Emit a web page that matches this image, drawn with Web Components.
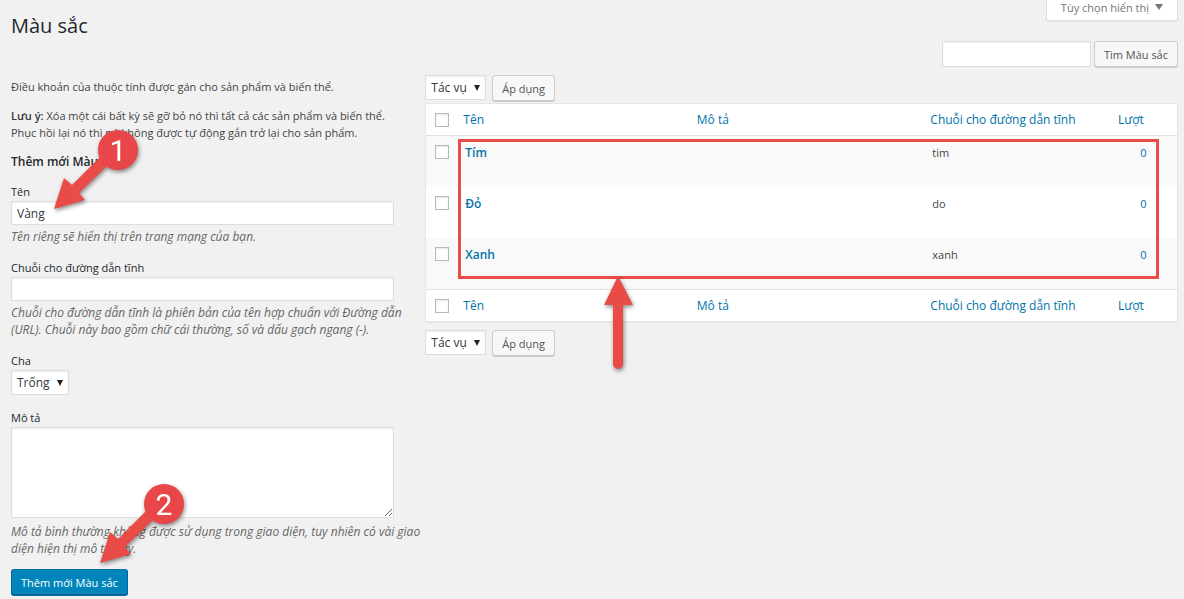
<!DOCTYPE html>
<html lang="vi">
<head>
<meta charset="utf-8">
<meta name="viewport" content="width=device-width, initial-scale=1">
<title>Màu sắc</title>
<style>
  body {
    margin: 0;
    background: #f1f1f1;
    color: #444;
    font: 11px/17px "Open Sans", "Noto Sans", sans-serif;
  }
</style>
</head>
<body>
<terms-page></terms-page>

<script>
/**
 * Creates a template element from markup.
 *
 * @param {string} markup - The styles and markup of a component.
 * @returns {HTMLTemplateElement} The template.
 */
const createTemplate = (markup) => {
  const template = document.createElement('template')
  template.innerHTML = markup
  return template
}

// Rules shared by the controls of several components.
const controlStyles = `
  input, textarea, select, button {
    box-sizing: border-box;
    margin: 0;
    color: #32373c;
    font-family: inherit;
    font-size: 11px;
    line-height: 17px;
  }
  input, textarea, select {
    border: 1px solid #ddd;
    border-radius: 0;
    background: #fff;
    box-shadow: inset 0 1px 2px rgba(0, 0, 0, 0.07);
  }
  .select {
    display: inline-grid;
    align-items: center;
    vertical-align: top;
  }
  .select select, .select svg {
    grid-area: 1 / 1;
  }
  select {
    appearance: none;
    height: 25px;
    padding: 0 18px 0 5px;
    font-size: 12px;
  }
  .select svg {
    justify-self: end;
    margin-right: 6px;
    pointer-events: none;
  }
`

const selectArrow = `
  <svg width="6" height="6" viewBox="0 0 6 6" aria-hidden="true">
    <path d="M0 0h6L3 6z" fill="#222"/>
  </svg>
`

/**
 * Base class that clones a template into an open shadow root.
 *
 * @augments HTMLElement
 */
class BaseElement extends HTMLElement {
  /**
   * Creates an instance of BaseElement.
   */
  constructor () {
    super()
    this.attachShadow({ mode: 'open' })
    this.shadowRoot.appendChild(this.constructor.template.content.cloneNode(true))
  }
}

/**
 * Push button, secondary by default and blue with the primary attribute.
 */
class ActionButton extends BaseElement {
  static template = createTemplate(`
    <style>
      ${controlStyles}
      :host {
        display: inline-block;
      }
      button {
        display: block;
        height: 26px;
        padding: 0 9px;
        border: 1px solid #ccc;
        border-radius: 3px;
        background: #f7f7f7;
        box-shadow: 0 1px 0 #ccc;
        color: #555;
        white-space: nowrap;
      }
      :host([primary]) button {
        border-color: #0073aa #006799 #006799;
        background: #0085ba;
        box-shadow: 0 1px 0 #006799;
        color: #fff;
      }
    </style>
    <button type="button"><slot></slot></button>
  `)
}
customElements.define('action-button', ActionButton)

/**
 * Labelled form field. The kind attribute is text, select or textarea,
 * the default slot takes the description below the control.
 */
class FormField extends BaseElement {
  static template = createTemplate(`
    <style>
      ${controlStyles}
      :host {
        display: block;
        position: relative;
      }
      label {
        display: block;
        margin-bottom: 1px;
        color: #23282d;
      }
      input, textarea {
        display: block;
        width: calc(100% - 31px);
        padding: 2px 5px;
      }
      input {
        height: 24px;
        font-size: 12px;
      }
      textarea {
        height: 91px;
        margin-bottom: 5px;
        resize: vertical;
      }
      p {
        margin: 3px 0 0;
        color: #666;
        font-size: 12px;
        font-style: italic;
      }
    </style>
    <label for="control"></label>
    <div class="control"></div>
    <p><slot></slot></p>
    <slot name="marker"></slot>
  `)

  /**
   * Builds the control that the kind attribute asks for.
   */
  connectedCallback () {
    const kind = this.getAttribute('kind')
    const value = this.getAttribute('value') || ''
    const holder = this.shadowRoot.querySelector('.control')
    this.shadowRoot.querySelector('label').textContent = this.getAttribute('label')

    if (kind === 'textarea') {
      holder.innerHTML = '<textarea id="control"></textarea>'
    } else if (kind === 'select') {
      holder.innerHTML = `
        <div class="select">
          <select id="control"><option>${value}</option></select>
          ${selectArrow}
        </div>`
      this.shadowRoot.querySelector('p').remove()
    } else {
      holder.innerHTML = `<input id="control" type="text" value="${value}">`
    }
  }
}
customElements.define('form-field', FormField)

/**
 * Numbered badge with an arrow that points down to the left.
 * The bottom left corner of the box is the tip of the arrow.
 */
class StepArrow extends BaseElement {
  static template = createTemplate(`
    <style>
      :host {
        position: absolute;
        z-index: 1;
        pointer-events: none;
      }
      svg {
        display: block;
        overflow: visible;
        filter: drop-shadow(1px 2px 2px rgba(0, 0, 0, 0.45));
      }
      text {
        font: 30px Roboto, sans-serif;
      }
    </style>
    <svg width="84" height="79" viewBox="0 0 84 79">
      <path d="M0 79L10 48l8 7 31-31 8 8-32 31 6 7z" fill="#e94b46"/>
      <circle cx="64" cy="20" r="20" fill="#e84648"/>
      <text x="64" y="31" text-anchor="middle" fill="#fff"></text>
    </svg>
  `)

  /**
   * Writes the number of the step.
   */
  connectedCallback () {
    this.shadowRoot.querySelector('text').textContent = this.getAttribute('step')
  }
}
customElements.define('step-arrow', StepArrow)

/**
 * Form for a new term.
 */
class TermForm extends BaseElement {
  static template = createTemplate(`
    <style>
      :host {
        display: block;
      }
      p {
        margin: 0 0 12px;
      }
      strong, h2 {
        color: #32373c;
        font-weight: 600;
      }
      h2 {
        margin: 0 0 13px;
        color: #23282d;
        font-size: 12px;
        line-height: 17px;
      }
      form {
        display: flex;
        flex-direction: column;
        gap: 14px;
      }
      .submit {
        position: relative;
        margin-top: -2px;
      }
      .name-step {
        left: 43px;
        bottom: 36px;
      }
      .submit-step {
        left: 89px;
        bottom: 32px;
      }
    </style>
    <p>Điều khoản của thuộc tính được gán cho sản phẩm và biến thể.</p>
    <p><strong>Lưu ý:</strong> Xóa một cái bất kỳ sẽ gỡ bỏ nó thì tất cả các sản phẩm và biến thể.<br>Phục hồi lại nó thì nó không được tự động gắn trở lại cho sản phẩm.</p>
    <h2>Thêm mới Màu sắc</h2>
    <form>
      <form-field kind="text" label="Tên" value="Vàng">
        Tên riêng sẽ hiển thị trên trang mạng của bạn.
        <step-arrow slot="marker" class="name-step" step="1"></step-arrow>
      </form-field>
      <form-field kind="text" label="Chuỗi cho đường dẫn tĩnh">Chuỗi cho đường dẫn tĩnh là phiên bản của tên hợp chuẩn với Đường dẫn (URL). Chuỗi này bao gồm chữ cái thường, số và dấu gạch ngang (-).</form-field>
      <form-field kind="select" label="Cha" value="Trống"></form-field>
      <form-field kind="textarea" label="Mô tả">Mô tả bình thường không được sử dụng trong giao diện, tuy nhiên có vài giao diện hiện thị mô tả này.</form-field>
      <div class="submit">
        <action-button primary>Thêm mới Màu sắc</action-button>
        <step-arrow class="submit-step" step="2"></step-arrow>
      </div>
    </form>
  `)
}
customElements.define('term-form', TermForm)

/**
 * Bulk action list with its apply button.
 */
class BulkActions extends BaseElement {
  static template = createTemplate(`
    <style>
      ${controlStyles}
      :host {
        display: flex;
        align-items: flex-start;
        gap: 6px;
      }
    </style>
    <div class="select">
      <select aria-label="Tác vụ"><option>Tác vụ</option></select>
      ${selectArrow}
    </div>
    <action-button>Áp dụng</action-button>
  `)
}
customElements.define('bulk-actions', BulkActions)

/**
 * Table of terms, with a red frame over the rows and an arrow below it.
 */
class TermTable extends BaseElement {
  static terms = [
    { name: 'Tím', slug: 'tim', count: 0 },
    { name: 'Đỏ', slug: 'do', count: 0 },
    { name: 'Xanh', slug: 'xanh', count: 0 }
  ]

  static template = createTemplate(`
    <style>
      :host {
        display: block;
        position: relative;
      }
      table {
        box-sizing: border-box;
        width: 100%;
        table-layout: fixed;
        border: 1px solid #e5e5e5;
        border-spacing: 0;
        background: #fff;
        box-shadow: 0 1px 1px rgba(0, 0, 0, 0.04);
      }
      .check {
        width: 29px;
      }
      .slug {
        width: 25%;
      }
      .count {
        width: 67px;
      }
      th, td {
        padding: 0;
        text-align: left;
        vertical-align: top;
        font-weight: 400;
      }
      thead th, tfoot th {
        height: 31px;
        padding-left: 8px;
        font-size: 12px;
        vertical-align: middle;
      }
      thead th, thead td {
        border-bottom: 1px solid #e1e1e1;
      }
      tfoot th, tfoot td {
        border-top: 1px solid #e1e1e1;
      }
      tbody tr {
        height: 51px;
      }
      tbody tr:nth-child(odd) {
        background: #f9f9f9;
      }
      tbody th, tbody td {
        padding: 8px 10px;
      }
      tbody th {
        font-size: 12px;
        font-weight: 600;
      }
      tbody td:last-child {
        text-align: center;
      }
      a {
        color: #0073aa;
        text-decoration: none;
      }
      .tick, tbody .tick {
        padding: 9px 0 0 9px;
      }
      input {
        appearance: none;
        display: block;
        box-sizing: border-box;
        width: 14px;
        height: 14px;
        margin: 0;
        border: 1px solid #b4b9be;
        background: #fff;
        box-shadow: inset 0 1px 2px rgba(0, 0, 0, 0.1);
      }
      .frame {
        position: absolute;
        inset: 36px 19px 43px 33px;
        border: 3px solid #e94b46;
        pointer-events: none;
      }
      .frame svg {
        position: absolute;
        top: 100%;
        left: 143px;
        overflow: visible;
        filter: drop-shadow(1px 2px 2px rgba(0, 0, 0, 0.45));
      }
    </style>
    <table>
      <colgroup>
        <col class="check"><col><col><col class="slug"><col class="count">
      </colgroup>
      <thead></thead>
      <tbody></tbody>
      <tfoot></tfoot>
    </table>
    <div class="frame">
      <svg width="29" height="93" viewBox="0 0 29 93" aria-hidden="true">
        <path d="M14 0l15 29H19v59a5 5 0 0 1-10 0V29H0z" fill="#e94b46"/>
      </svg>
    </div>
  `)

  /**
   * Renders the heading rows and the terms.
   */
  connectedCallback () {
    const heading = `
      <tr>
        <td class="tick"><input type="checkbox" aria-label="Tất cả"></td>
        <th scope="col"><a href="#">Tên</a></th>
        <th scope="col"><a href="#">Mô tả</a></th>
        <th scope="col"><a href="#">Chuỗi cho đường dẫn tĩnh</a></th>
        <th scope="col"><a href="#">Lượt</a></th>
      </tr>`
    this.shadowRoot.querySelector('thead').innerHTML = heading
    this.shadowRoot.querySelector('tfoot').innerHTML = heading
    this.shadowRoot.querySelector('tbody').innerHTML = TermTable.terms.map((term) => `
      <tr>
        <td class="tick"><input type="checkbox" aria-label="${term.name}"></td>
        <th scope="row"><a href="#">${term.name}</a></th>
        <td></td>
        <td>${term.slug}</td>
        <td><a href="#">${term.count}</a></td>
      </tr>`).join('')
  }
}
customElements.define('term-table', TermTable)

/**
 * Search field with its button.
 */
class SearchBox extends BaseElement {
  static template = createTemplate(`
    <style>
      ${controlStyles}
      :host {
        display: flex;
        justify-content: flex-end;
        gap: 3px;
      }
      input {
        width: 149px;
        height: 26px;
        padding: 3px 5px;
      }
    </style>
    <input type="search" aria-label="Tìm Màu sắc">
    <action-button>Tìm Màu sắc</action-button>
  `)
}
customElements.define('search-box', SearchBox)

/**
 * Tab at the top of the page that opens the screen options.
 */
class ScreenOptions extends BaseElement {
  static template = createTemplate(`
    <style>
      :host {
        display: block;
      }
      button {
        display: flex;
        align-items: center;
        gap: 6px;
        height: 21px;
        padding: 0 14px 6px;
        border: 1px solid #ddd;
        border-top: 0;
        background: #fff;
        box-shadow: 0 1px 1px rgba(0, 0, 0, 0.04);
        color: #72777c;
        font: inherit;
      }
    </style>
    <button type="button">
      Tùy chọn hiển thị
      <svg width="8" height="6" viewBox="0 0 8 6" aria-hidden="true">
        <path d="M0 0h8L4 6z" fill="#72777c"/>
      </svg>
    </button>
  `)
}
customElements.define('screen-options', ScreenOptions)

/**
 * The whole page: header, form on the left and table on the right.
 */
class TermsPage extends BaseElement {
  static template = createTemplate(`
    <style>
      :host {
        display: block;
        padding: 0 6px 4px 11px;
      }
      header {
        display: flex;
        justify-content: space-between;
        align-items: flex-start;
        height: 41px;
      }
      h1 {
        margin: 11px 0 0;
        color: #23282d;
        font-size: 20px;
        font-weight: 400;
        line-height: 29px;
      }
      main {
        display: grid;
        grid-template-columns: 71fr 129fr;
        margin-top: 8px;
      }
      term-form {
        padding-top: 3px;
      }
      section {
        display: flex;
        flex-direction: column;
        gap: 2px;
      }
      .bottom {
        margin-top: 6px;
      }
    </style>
    <header>
      <h1>Màu sắc</h1>
      <screen-options></screen-options>
    </header>
    <search-box></search-box>
    <main>
      <term-form></term-form>
      <section>
        <bulk-actions></bulk-actions>
        <term-table></term-table>
        <bulk-actions class="bottom"></bulk-actions>
      </section>
    </main>
  `)
}
customElements.define('terms-page', TermsPage)
</script>
</body>
</html>
